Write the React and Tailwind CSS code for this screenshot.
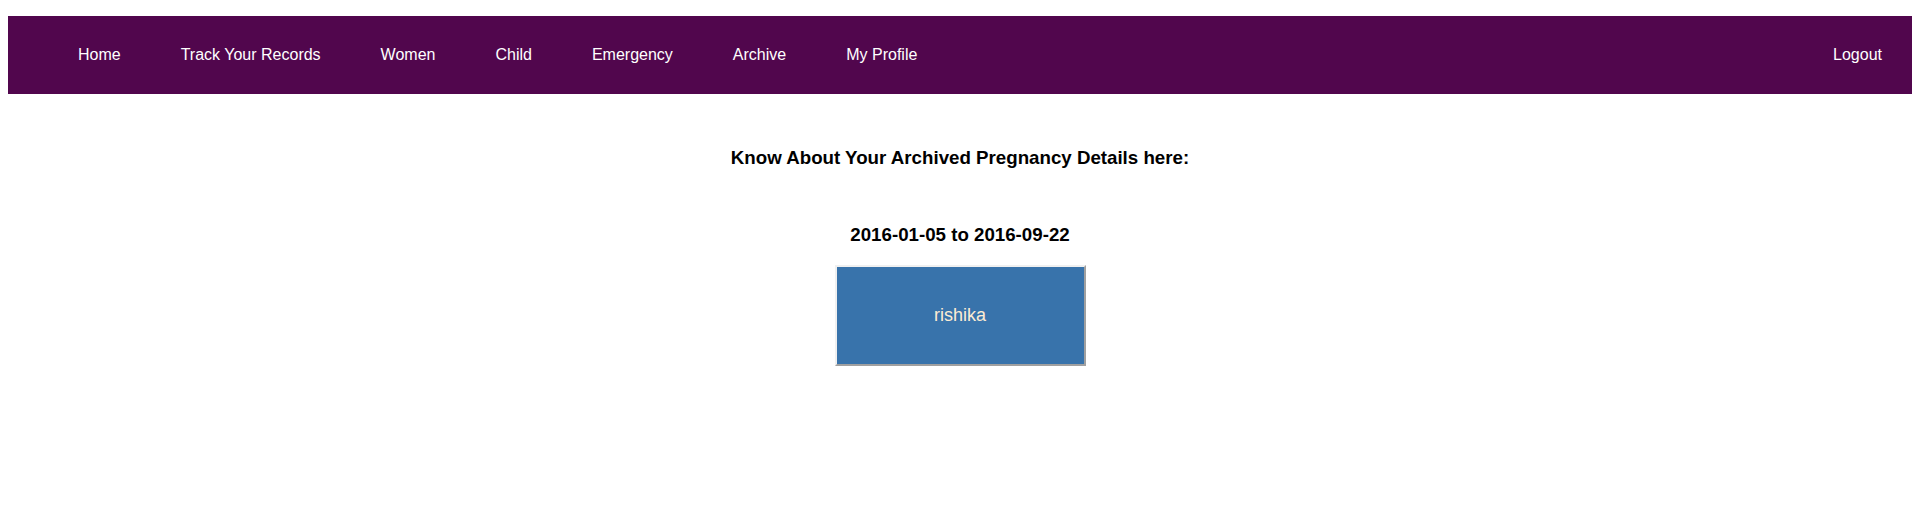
const NAV_ITEMS = ['Home', 'Track Your Records', 'Women', 'Child', 'Emergency', 'Archive', 'My Profile'];

export default function App() {
  return (
    <div className="h-[512px] bg-white pt-4 px-2 font-['Liberation_Sans',Arial,sans-serif]">
      {/* Top nav */}
      <nav className="h-[78px] bg-[#51064d] flex items-center pl-[40px] text-white text-[16px]">
        {NAV_ITEMS.map((item) => (
          <a key={item} href="#" className="px-[30px] leading-normal">
            {item}
          </a>
        ))}
        <a href="#" className="ml-auto px-[30px] leading-normal">Logout</a>
      </nav>

      {/* Archive content */}
      <div className="text-center text-black">
        <h3 className="mt-[50px] text-[18.72px] font-bold leading-normal">
          Know About Your Archived Pregnancy Details here:
        </h3>
        <h3 className="mt-[49px] text-[18.72px] font-bold leading-normal">
          2016-01-05 to 2016-09-22
        </h3>
        <button
          className="mt-[16px] mx-auto flex items-center justify-center w-[251px] h-[101px] bg-[#3873ab] text-[#fcecd4] text-[18px] border-2 border-t-[#f0f0f0] border-l-[#f0f0f0] border-r-[#a0a0a0] border-b-[#a0a0a0]"
        >
          rishika
        </button>
      </div>
    </div>
  );
}
